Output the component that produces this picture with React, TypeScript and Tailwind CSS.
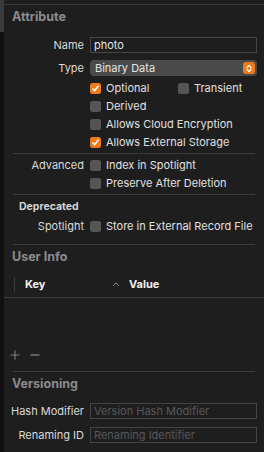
import React from "react";

const font = { fontFamily: "Inter, 'Noto Sans', sans-serif" };

function Check({ checked }: { checked?: boolean }) {
  if (checked) {
    return (
      <span className="flex h-[11px] w-[11px] shrink-0 items-center justify-center rounded-[2.5px] bg-[#ee7a1e]">
        <svg width="9" height="9" viewBox="0 0 10 10" fill="none">
          <path d="M2 5.2l2.1 2.3L8 2.2" stroke="#fff" strokeWidth="1.6" strokeLinecap="round" strokeLinejoin="round" />
        </svg>
      </span>
    );
  }
  return <span className="h-[11px] w-[11px] shrink-0 rounded-[2.5px] bg-[#555556]" />;
}

function Row({ label, children, className = "h-[18px]" }: { label?: string; children: React.ReactNode; className?: string }) {
  return (
    <div className={`flex items-center ${className}`}>
      <div className="w-[81px] shrink-0 pr-[1px] text-right text-[11px] text-[#dadada]">{label}</div>
      <div className="ml-[5px] flex flex-1 items-center pr-[7px]">{children}</div>
    </div>
  );
}

function CheckItem({ label, checked }: { label: string; checked?: boolean }) {
  return (
    <div className="flex items-center gap-[5px]">
      <Check checked={checked} />
      <span className="text-[11px] text-[#e0e0e0]">{label}</span>
    </div>
  );
}

function Sep({ className = "" }: { className?: string }) {
  return <div className={`mx-[9px] h-px bg-[#3a3a3b] ${className}`} />;
}

function Field({ value, placeholder }: { value?: string; placeholder?: string }) {
  return (
    <div className="flex h-[16px] flex-1 items-center border border-[#454546] bg-[#1e1e1f] px-[3px] text-[11px]">
      {value ? <span className="text-[#e4e4e4]">{value}</span> : <span className="text-[#58585a]">{placeholder}</span>}
    </div>
  );
}

function Header({ children }: { children: React.ReactNode }) {
  return <div className="flex h-[24px] items-center pl-[8px] text-[12.5px] font-bold text-[#8b8b8c]">{children}</div>;
}

export default function App() {
  return (
    <div className="flex h-[452px] w-[264px] overflow-hidden bg-[#1e1e1f]" style={font}>
      <div className="flex w-[4px] shrink-0 flex-col">
        <div className="h-[32px] bg-[#3b3b3c]" />
        <div className="flex-1 bg-[#101010]" />
      </div>
      <div className="flex flex-1 flex-col">
        <div className="mt-[4px] h-px bg-[#373738]" />
        <Header>Attribute</Header>

        <Row label="Name" className="mt-[8px] h-[16px]">
          <Field value="photo" />
        </Row>
        <Row label="Type" className="mt-[7px] h-[16px]">
          <div className="flex h-[16px] flex-1 items-center justify-between rounded-[4px] bg-[#4a4a4b] pl-[5px] pr-[2px] text-[11px] text-[#e4e4e4]">
            <span>Binary Data</span>
            <span className="flex h-[12px] w-[12px] items-center justify-center rounded-[3px] bg-[#ee7a1e]">
              <svg width="8" height="9" viewBox="0 0 8 9" fill="none">
                <path d="M2 3.5L4 1.5L6 3.5M2 5.5L4 7.5L6 5.5" stroke="#fff" strokeWidth="1.2" strokeLinecap="round" strokeLinejoin="round" />
              </svg>
            </span>
          </div>
        </Row>

        <Row className="mt-[3px] h-[18px]">
          <div className="w-[88px]">
            <CheckItem label="Optional" checked />
          </div>
          <CheckItem label="Transient" />
        </Row>
        <Row>
          <CheckItem label="Derived" />
        </Row>
        <Row>
          <CheckItem label="Allows Cloud Encryption" />
        </Row>
        <Row>
          <CheckItem label="Allows External Storage" checked />
        </Row>

        <Sep className="mt-[2px]" />
        <Row label="Advanced" className="mt-[2px] h-[18px]">
          <CheckItem label="Index in Spotlight" />
        </Row>
        <Row>
          <CheckItem label="Preserve After Deletion" />
        </Row>
        <Sep className="mt-[2px]" />

        <div className="mt-[3px] flex h-[18px] items-center pl-[15px] text-[10.5px] font-bold text-[#d4d4d4]">Deprecated</div>
        <Row label="Spotlight" className="mt-[1px] h-[18px]">
          <CheckItem label="Store in External Record File" />
        </Row>
        <Sep className="mt-[9px]" />

        <Header>User Info</Header>
        <div className="mt-[3px] flex h-[26px] items-center border-b border-[#3a3a3b] pl-[10px]">
          <div className="h-[15px] w-px bg-[#3c3c3d]" />
          <span className="ml-[10px] w-[87px] text-[11px] font-bold text-[#f0f0f0]">Key</span>
          <svg width="8" height="5" viewBox="0 0 8 5" fill="none">
            <path d="M1 4l3-3 3 3" stroke="#8a8a8a" strokeWidth="1" />
          </svg>
          <span className="ml-[9px] text-[11px] font-bold text-[#f0f0f0]">Value</span>
        </div>
        <div className="h-[49px]" />
        <div className="flex h-[16px] items-center gap-[10px] pl-[6px]">
          <svg width="10" height="10" viewBox="0 0 10 10">
            <path d="M5 0.5v9M0.5 5h9" stroke="#7a7a7b" strokeWidth="1.2" />
          </svg>
          <svg width="10" height="10" viewBox="0 0 10 10">
            <path d="M0.5 5h9" stroke="#8a8a8b" strokeWidth="1.2" />
          </svg>
        </div>
        <Sep className="mt-[8px]" />

        <Header>Versioning</Header>
        <Row label="Hash Modifier" className="mt-[7px] h-[16px]">
          <Field placeholder="Version Hash Modifier" />
        </Row>
        <Row label="Renaming ID" className="mt-[8px] h-[16px]">
          <Field placeholder="Renaming Identifier" />
        </Row>
      </div>
    </div>
  );
}
